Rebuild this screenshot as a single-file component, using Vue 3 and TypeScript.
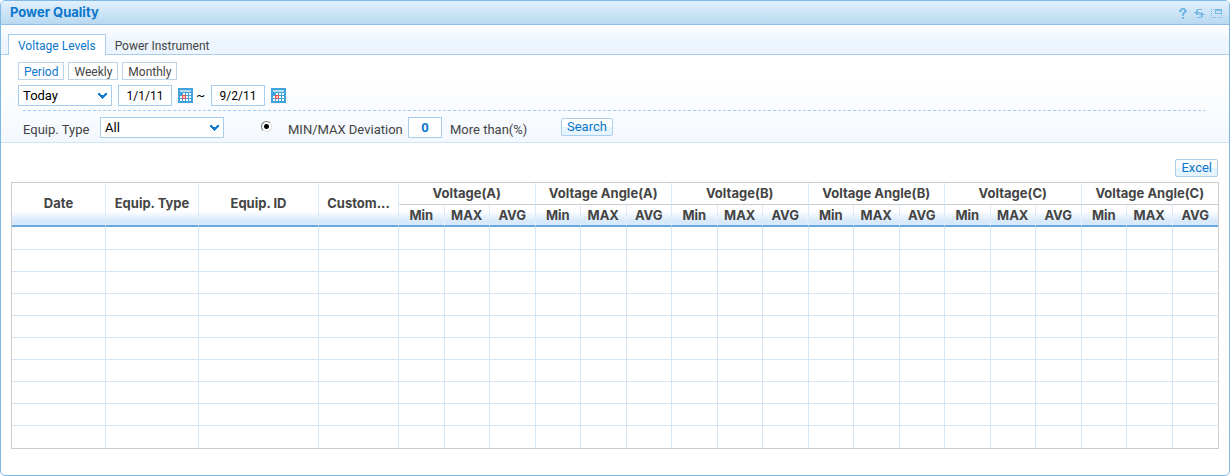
<script setup lang="ts">
import { ref } from 'vue'

const tab = ref('Voltage Levels')
const tabs = ['Voltage Levels', 'Power Instrument']
const range = ref('Period')
const ranges = ['Period', 'Weekly', 'Monthly']
const day = ref('Today')
const from = ref('1/1/11')
const to = ref('9/2/11')
const equipType = ref('All')
const filterBy = ref('deviation')
const deviation = ref('0')

const mainColumns = ['Date', 'Equip. Type', 'Equip. ID', 'Custom...']
const groups = [
  'Voltage(A)',
  'Voltage Angle(A)',
  'Voltage(B)',
  'Voltage Angle(B)',
  'Voltage(C)',
  'Voltage Angle(C)',
]
const measures = ['Min', 'MAX', 'AVG']
const rowCount = 10
const cellCount = mainColumns.length + groups.length * measures.length
</script>

<template>
  <main class="panel">
    <header class="titlebar">
      <h1>Power Quality</h1>
      <div class="tools">
        <button type="button" aria-label="Help">
          <svg width="9" height="11" viewBox="0 0 9 11" shape-rendering="crispEdges">
            <path d="M2 0h4v1h1v1h1v2H7v1H6v1H5v2H3V5h1V4h1V2H3v2H0V2h1V1h1zM3 9h2v2H3z" fill="#79bbe8" />
          </svg>
        </button>
        <button type="button" aria-label="Refresh">
          <svg width="11" height="11" viewBox="0 0 11 11" shape-rendering="crispEdges">
            <path d="M3 1h5v1H4v2h2v1H5v1H4v1H2V6H1V5H0V4h2V2h1zM7 4h1v1h1v1h2v1H9v2H8v1H3V9h4V7H5V6h1V5h1z" fill="#79bbe8" />
          </svg>
        </button>
        <button type="button" aria-label="Restore window">
          <svg width="12" height="11" viewBox="0 0 12 11" shape-rendering="crispEdges">
            <path d="M0 1h1v1H0zM2 1h1v1H2zM0 3h1v1H0zM0 5h1v1H0zM0 7h1v1H0zM0 9h1v1H0zM2 9h1v1H2zM4 9h1v1H4zM6 9h1v1H6zM8 9h1v1H8zM10 9h1v1h-1zM10 7h1v1h-1zM4 1h7v5H4zM5 3v2h5V3z" fill="#79bbe8" fill-rule="evenodd" />
          </svg>
        </button>
      </div>
    </header>

    <nav class="tabs" role="tablist">
      <button
        v-for="t in tabs"
        :key="t"
        type="button"
        role="tab"
        :aria-selected="tab === t"
        :class="{ active: tab === t }"
        @click="tab = t"
      >{{ t }}</button>
    </nav>

    <form class="filters" @submit.prevent>
      <div class="ranges">
        <button
          v-for="r in ranges"
          :key="r"
          type="button"
          :class="{ active: range === r }"
          @click="range = r"
        >{{ r }}</button>
      </div>

      <div class="dates">
        <span class="select day">
          <select v-model="day" aria-label="Day">
            <option>Today</option>
          </select>
          <svg width="9" height="6" viewBox="0 0 9 6" shape-rendering="crispEdges">
            <path d="M0 0h2v1h1v1h3V1h1V0h2v2H8v1H7v1H6v1H5v1H4V5H3V4H2V3H1V2H0z" fill="#0a7ad0" />
          </svg>
        </span>
        <input v-model="from" class="date" type="text" aria-label="From" />
        <button type="button" class="calendar" aria-label="Choose start date">
          <svg width="15" height="15" viewBox="0 0 15 15" shape-rendering="crispEdges">
            <path d="M0 0h15v15H0z" fill="#41a3dc" />
            <path d="M2 2h11v2H2z" fill="#b9dcf8" />
            <path d="M5 5h2v2H5zM8 5h2v2H8zM11 5h2v2h-2zM2 8h2v2H2zM5 8h2v2H5zM8 8h2v2H8zM11 8h2v2h-2zM2 11h2v2H2zM5 11h2v2H5zM8 11h2v2H8zM11 11h2v2h-2z" fill="#fff" />
            <path d="M4 7h4v4H4z" fill="#f4504e" />
            <path d="M5 8h2v2H5z" fill="#ffc9c4" />
          </svg>
        </button>
        <span class="tilde">~</span>
        <input v-model="to" class="date" type="text" aria-label="To" />
        <button type="button" class="calendar" aria-label="Choose end date">
          <svg width="15" height="15" viewBox="0 0 15 15" shape-rendering="crispEdges">
            <path d="M0 0h15v15H0z" fill="#41a3dc" />
            <path d="M2 2h11v2H2z" fill="#b9dcf8" />
            <path d="M5 5h2v2H5zM8 5h2v2H8zM11 5h2v2h-2zM2 8h2v2H2zM5 8h2v2H5zM8 8h2v2H8zM11 8h2v2h-2zM2 11h2v2H2zM5 11h2v2H5zM8 11h2v2H8zM11 11h2v2h-2z" fill="#fff" />
            <path d="M4 7h4v4H4z" fill="#f4504e" />
            <path d="M5 8h2v2H5z" fill="#ffc9c4" />
          </svg>
        </button>
      </div>

      <div class="divider"></div>

      <div class="criteria">
        <label class="equip-label" for="equip-type">Equip. Type</label>
        <span class="select equip">
          <select id="equip-type" v-model="equipType">
            <option>All</option>
          </select>
          <svg width="9" height="6" viewBox="0 0 9 6" shape-rendering="crispEdges">
            <path d="M0 0h2v1h1v1h3V1h1V0h2v2H8v1H7v1H6v1H5v1H4V5H3V4H2V3H1V2H0z" fill="#0a7ad0" />
          </svg>
        </span>
        <input id="by-deviation" v-model="filterBy" type="radio" name="filter" value="deviation" />
        <label class="deviation-label" for="by-deviation">MIN/MAX Deviation</label>
        <input id="deviation" v-model="deviation" class="number" type="text" />
        <label class="more-label" for="deviation">More than(%)</label>
        <button type="submit" class="action">Search</button>
      </div>
    </form>

    <section class="results">
      <div class="export">
        <button type="button" class="action">Excel</button>
      </div>
      <table>
        <colgroup>
          <col class="c-date" />
          <col class="c-type" />
          <col class="c-id" />
          <col class="c-customer" />
          <col v-for="n in groups.length * measures.length" :key="n" />
        </colgroup>
        <thead>
          <tr>
            <th v-for="c in mainColumns" :key="c" class="leaf main" rowspan="2" scope="col">{{ c }}</th>
            <th v-for="g in groups" :key="g" class="group" colspan="3" scope="colgroup">{{ g }}</th>
          </tr>
          <tr>
            <template v-for="g in groups" :key="g">
              <th v-for="m in measures" :key="m" class="leaf" scope="col">{{ m }}</th>
            </template>
          </tr>
        </thead>
        <tbody>
          <tr v-for="r in rowCount" :key="r">
            <td v-for="c in cellCount" :key="c"></td>
          </tr>
        </tbody>
      </table>
    </section>
  </main>
</template>

<style>
body {
  background: #fff;
}
</style>

<style scoped>
* {
  box-sizing: border-box;
}

.panel {
  overflow: hidden;
  padding-bottom: 26px;
  border: 1px solid #7fb9e3;
  border-radius: 5px;
  background: #fff;
  color: #444;
  font: 13px/16px Roboto, "Liberation Sans", sans-serif;
}

button,
input,
select {
  margin: 0;
  padding: 0;
  border: 0;
  background: none;
  color: inherit;
  font: inherit;
}

svg {
  display: block;
}

.titlebar {
  display: flex;
  align-items: center;
  justify-content: space-between;
  height: 24px;
  padding: 0 6px 0 9px;
  border-bottom: 1px solid #8fbbe6;
  background: linear-gradient(#e2f0fd, #b9d9f1);
}

h1 {
  margin: 0;
  padding-bottom: 2px;
  color: #0b76cc;
  font: bold 13px/16px Inter, "Liberation Sans", sans-serif;
}

.tools {
  display: flex;
  gap: 6px;
  padding-top: 2px;
}

.tabs {
  display: flex;
  align-items: flex-end;
  height: 30px;
  padding-left: 7px;
  background: linear-gradient(#fff, #ecf4fe 60%, #ecf4fe 29px, #a9cdec 29px);
  font-size: 12px;
}

.tabs button {
  height: 21px;
  padding: 2px 8px 0;
  border: 1px solid transparent;
  border-bottom: 0;
}

.tabs .active {
  padding: 2px 9px 0;
  border-color: #a9cdec;
  background: #fff;
  color: #0b76cc;
}

.filters {
  padding-top: 7px;
  border-bottom: 1px solid #cfe4f5;
  background: linear-gradient(#fff 30%, #f3f8fe);
}

.ranges {
  display: flex;
  gap: 4px;
  padding-left: 17px;
  font-size: 12px;
}

.ranges button {
  height: 18px;
  padding: 1px 5px 0;
  border: 1px solid #bcd4ea;
  background: #fff;
  line-height: 14px;
}

.ranges .active {
  color: #0b76cc;
}

.dates {
  display: flex;
  align-items: center;
  padding: 5px 0 4px 17px;
  color: #000;
}

.select {
  display: grid;
  align-items: center;
}

.select > * {
  grid-area: 1 / 1;
}

.select svg {
  justify-self: end;
  margin-right: 5px;
  pointer-events: none;
}

select {
  width: 100%;
  height: 21px;
  padding: 0 16px 0 4px;
  border: 1px solid #a9cdec;
  border-radius: 0;
  background: #fff;
  color: #000;
  appearance: none;
}

.day {
  width: 94px;
}

.date {
  width: 54px;
  height: 21px;
  margin-left: 6px;
  border: 1px solid #a9cdec;
  background: #fff;
  font-size: 12px;
  text-align: center;
}

.calendar {
  margin-left: 6px;
}

.tilde {
  width: 12px;
  text-align: right;
}

.divider {
  height: 1px;
  margin: 0 24px 0 22px;
  background: repeating-linear-gradient(90deg, #a9cdec 0 3px, transparent 3px 5px);
}

.criteria {
  display: flex;
  align-items: center;
  padding: 6px 0 4px 22px;
}

.equip-label {
  width: 77px;
  padding-top: 4px;
}

.equip {
  width: 124px;
}

input[type='radio'] {
  width: 11px;
  height: 11px;
  margin: 0 16px 2px 37px;
  border: 1px solid;
  border-color: #777 #ddd #ddd #777;
  border-radius: 50%;
  background: radial-gradient(circle, #000 0 2px, #fff 3px);
  appearance: none;
}

.deviation-label {
  width: 120px;
  padding-top: 4px;
}

.number {
  width: 34px;
  height: 21px;
  border: 1px solid #a9cdec;
  background: #fff;
  color: #0b76cc;
  font-weight: bold;
  text-align: center;
}

.more-label {
  width: 119px;
  padding: 4px 0 0 8px;
}

.action {
  height: 18px;
  margin-bottom: 2px;
  padding: 0 5px;
  border: 1px solid #a9cfee;
  border-radius: 2px;
  background: linear-gradient(#fff 50%, #e6f4fd 50%);
  color: #0b76cc;
  line-height: 16px;
}

.results {
  padding: 16px 10px 0;
}

.export {
  display: flex;
  justify-content: flex-end;
  padding: 0 1px 3px 0;
}

table {
  width: 100%;
  border: 1px solid #ccc;
  border-spacing: 0;
  table-layout: fixed;
}

.c-date {
  width: 94px;
}

.c-type {
  width: 93px;
}

.c-id {
  width: 120px;
}

.c-customer {
  width: 80px;
}

th {
  height: 22px;
  padding: 0;
  border-right: 1px solid #dcebf8;
  font: bold 13px/16px Inter, "Liberation Sans", sans-serif;
  white-space: nowrap;
}

.group {
  padding-bottom: 2px;
  border-bottom: 1px solid #ccc;
}

.leaf {
  border-bottom: 2px solid #68a8df;
  background: linear-gradient(#fff, #d8e9fc 70%) bottom / 100% 14px no-repeat;
}

.main {
  padding-bottom: 2px;
}

td {
  height: 22px;
  padding: 0;
  border-right: 1px solid #d4e6f5;
  border-bottom: 1px solid #d4e6f5;
}

tbody tr:first-child td {
  height: 23px;
}

tbody tr:last-child td {
  border-bottom: 0;
}

tr > :last-child {
  border-right: 0;
}
</style>
